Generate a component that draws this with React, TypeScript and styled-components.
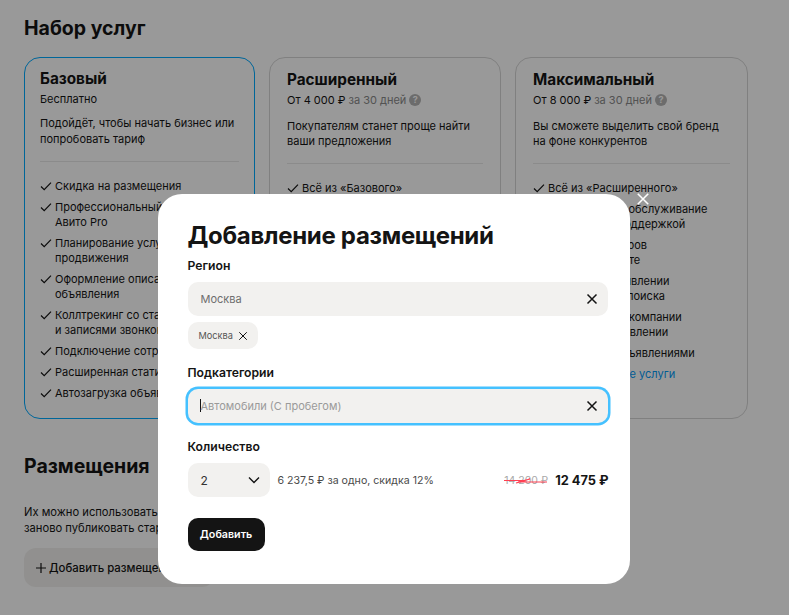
import React from "react";
import styled, { createGlobalStyle } from "styled-components";

const Global = createGlobalStyle`
  html, body { margin: 0; padding: 0; height: 100%; overflow: hidden; background: #fff; }
  body { font-family: Inter, "Noto Sans", sans-serif; color: #141414; }
  * { box-sizing: border-box; }
`;

const Page = styled.main`
  width: 789px;
  height: 615px;
  padding: 16px 41px 0 24px;
  overflow: hidden;
`;
const H2 = styled.h2`
  margin: 0;
  font-size: 19.5px;
  line-height: 24px;
  font-weight: 700;
`;
const Plans = styled.div`
  display: grid;
  grid-template-columns: 231px 232px 233px;
  gap: 14px;
  margin-top: 17px;
  height: 362px;
`;
const Card = styled.article<{ $active?: boolean }>`
  border: 1px solid ${(p) => (p.$active ? "#00aaff" : "#d6d6d6")};
  border-radius: 16px;
  padding: ${(p) => (p.$active ? "11px 15px 0" : "12px 17px 0")};
`;
const PlanName = styled.h3`
  margin: 0;
  font-size: 15.3px;
  line-height: 20px;
  font-weight: 700;
`;
const Price = styled.div`
  margin-top: 2px;
  display: flex;
  align-items: center;
  font-size: 11px;
  line-height: 16px;
  gap: 3px;
`;
const Muted = styled.span`
  color: #8a8a8a;
`;
const Help = styled.span`
  width: 12px;
  height: 12px;
  border-radius: 50%;
  background: #b5b5b5;
  color: #fff;
  font-size: 9px;
  line-height: 12px;
  font-weight: 700;
  text-align: center;
`;
const Desc = styled.p<{ $active?: boolean }>`
  margin: ${(p) => (p.$active ? "8px 0 0" : "11px 0 0")};
  font-size: 11px;
  line-height: ${(p) => (p.$active ? "16px" : "15px")};
`;
const Divider = styled.hr`
  border: 0;
  border-top: 1px solid #e8e8e8;
  margin: 14px 0 17px;
`;
const List = styled.ul`
  margin: 0;
  padding: 0;
  list-style: none;
  display: flex;
  flex-direction: column;
  gap: 6px;
`;
const Item = styled.li`
  display: flex;
  gap: 3px;
  font-size: 11px;
  line-height: 15px;
`;
const Check = styled.svg`
  flex: none;
  width: 12px;
  height: 12px;
  margin-top: 1px;
`;
const MoreLink = styled.a`
  font-size: 11px;
  line-height: 15px;
  color: #0099f7;
  padding-left: 15px;
`;
const Section = styled.section`
  margin-top: 35px;
`;
const SectionText = styled.p`
  margin: 26px 0 0;
  font-size: 11.2px;
  line-height: 16px;
`;
const AddPlacement = styled.button`
  margin-top: 12px;
  height: 39px;
  width: 190px;
  padding: 0 11px;
  display: flex;
  align-items: center;
  gap: 2px;
  border: 0;
  border-radius: 12px;
  background: #f2f1ef;
  font: 500 11.4px Inter, sans-serif;
  color: #141414;
  white-space: nowrap;
`;

const Overlay = styled.div`
  position: fixed;
  inset: 0;
  padding: 194px 2px 0 0;
  background: rgba(0, 0, 0, 0.4);
  display: flex;
  align-items: flex-start;
  justify-content: center;
`;
const Modal = styled.div`
  position: relative;
  width: 472px;
  height: 390px;
  background: #fff;
  border-radius: 24px;
  padding: 28px 22px 0 30px;
`;
const Close = styled.button`
  position: absolute;
  top: -2px;
  right: -20px;
  width: 14px;
  height: 14px;
  padding: 0;
  border: 0;
  background: none;
  color: #fff;
  display: flex;
`;
const Title = styled.h1`
  margin: 0;
  font-size: 24px;
  letter-spacing: -0.3px;
  line-height: 28px;
  font-weight: 700;
`;
const FieldLabel = styled.div<{ $top: number }>`
  font-size: 12.2px;
  line-height: 16px;
  font-weight: 600;
  margin-top: ${(p) => p.$top}px;
  margin-bottom: 8px;
`;
const Input = styled.div<{ $focused?: boolean }>`
  height: 34px;
  border-radius: 10px;
  background: #f2f1ef;
  padding: 0 10px 0 12px;
  display: flex;
  align-items: center;
  justify-content: space-between;
  font-size: 11px;
  color: ${(p) => (p.$focused ? "#9a9a9a" : "#6e6e6e")};
  ${(p) => (p.$focused ? "box-shadow: 0 0 0 2.5px #45c1ff;" : "")}
`;
const InputValue = styled.span`
  padding-left: 1px;
`;
const Caret = styled.span`
  display: inline-block;
  width: 1px;
  height: 13px;
  margin-left: -1px;
  background: #141414;
  vertical-align: -2px;
`;
const Chip = styled.div`
  margin-top: 6px;
  width: 70px;
  height: 27px;
  border-radius: 10px;
  background: #f2f1ef;
  display: flex;
  align-items: center;
  gap: 5px;
  padding-left: 11px;
  font-size: 9.2px;
  color: #555;
`;
const CountRow = styled.div`
  display: flex;
  align-items: center;
`;
const Select = styled.div`
  width: 82px;
  height: 34px;
  border-radius: 10px;
  background: #f2f1ef;
  padding: 0 10px 0 13px;
  display: flex;
  align-items: center;
  justify-content: space-between;
  font-size: 12px;
  color: #333;
`;
const Discount = styled.span`
  margin-left: 8px;
  font-size: 10.6px;
  color: #4a4a4a;
`;
const OldPrice = styled.span`
  position: relative;
  margin-left: auto;
  font-size: 10.5px;
  color: #a8a8a8;
`;
const Scribble = styled.svg`
  position: absolute;
  left: 0;
  top: 2px;
  width: 44px;
  height: 10px;
`;
const NewPrice = styled.span`
  margin-left: 7px;
  margin-right: -1px;
  font-size: 12.8px;
  font-weight: 700;
`;
const Submit = styled.button`
  margin-top: 21px;
  height: 33px;
  width: 77px;
  border: 0;
  border-radius: 10px;
  background: #141414;
  color: #fff;
  font: 600 10.7px Inter, sans-serif;
  padding: 0;
`;

const CheckIcon = () => (
  <Check viewBox="0 0 12 12" fill="none">
    <path d="M1 6.5 4.2 9.6 11 2.6" stroke="#141414" strokeWidth="1.2" />
  </Check>
);
const CrossIcon = ({ size = 12, color = "#141414", sw = 1.5 }: { size?: number; color?: string; sw?: number }) => (
  <svg width={size} height={size} viewBox="0 0 12 12" fill="none">
    <path d="M1.5 1.5 10.5 10.5M10.5 1.5 1.5 10.5" stroke={color} strokeWidth={sw} />
  </svg>
);

const plans = [
  {
    name: "Базовый",
    active: true,
    desc: ["Подойдёт, чтобы начать бизнес или", "попробовать тариф"],
    items: [
      ["Скидка на размещения"],
      ["Профессиональный кабинет", "Авито Pro"],
      ["Планирование услуг", "продвижения"],
      ["Оформление описания", "объявления"],
      ["Коллтрекинг со статистикой", "и записями звонков"],
      ["Подключение сотрудников"],
      ["Расширенная статистика"],
      ["Автозагрузка объявлений"],
    ],
  },
  {
    name: "Расширенный",
    price: "От 4 000 ₽",
    desc: ["Покупателям станет проще найти", "ваши предложения"],
    items: [["Всё из «Базового»"], ["Больше скидка на размещения"]],
  },
  {
    name: "Максимальный",
    price: "От 8 000 ₽",
    desc: ["Вы сможете выделить свой бренд", "на фоне конкурентов"],
    items: [
      ["Всё из «Расширенного»"],
      ["Приоритетное обслуживание", "и отдельной поддержкой"],
      ["Поднятие товаров", "на первом месте"],
      ["Логотип в объявлении", "и на странице поиска"],
      ["Данные своей компании", "в каждом объявлении"],
      ["Управление объявлениями"],
    ],
    more: "Посмотреть все услуги",
  },
];

export default function App() {
  return (
    <>
      <Global />
      <Page>
        <H2>Набор услуг</H2>
        <Plans>
          {plans.map((plan) => (
            <Card key={plan.name} $active={plan.active}>
              <PlanName>{plan.name}</PlanName>
              <Price>
                {plan.price ? (
                  <>
                    {plan.price} <Muted>за 30 дней</Muted> <Help>?</Help>
                  </>
                ) : (
                  "Бесплатно"
                )}
              </Price>
              <Desc $active={plan.active}>
                {plan.desc[0]}
                <br />
                {plan.desc[1]}
              </Desc>
              <Divider />
              <List>
                {plan.items.map((lines) => (
                  <Item key={lines[0]}>
                    <CheckIcon />
                    <span>
                      {lines.map((line, i) => (
                        <React.Fragment key={line}>
                          {i > 0 && <br />}
                          {line}
                        </React.Fragment>
                      ))}
                    </span>
                  </Item>
                ))}
                {plan.more && <MoreLink>{plan.more}</MoreLink>}
              </List>
            </Card>
          ))}
        </Plans>
        <Section>
          <H2>Размещения</H2>
          <SectionText>
            Их можно использовать для новых объявлений или
            <br />
            заново публиковать старые
          </SectionText>
          <AddPlacement>
            <svg width="12" height="12" viewBox="0 0 12 12" fill="none">
              <path d="M6 1v10M1 6h10" stroke="#141414" strokeWidth="1.2" />
            </svg>
            Добавить размещения
          </AddPlacement>
        </Section>
      </Page>
      <Overlay>
        <Modal>
          <Close aria-label="Закрыть">
            <CrossIcon size={14} color="#fff" sw={1.3} />
          </Close>
          <Title>Добавление размещений</Title>
          <FieldLabel $top={8}>Регион</FieldLabel>
          <Input>
            <InputValue>Москва</InputValue>
            <CrossIcon />
          </Input>
          <Chip>
            Москва
            <CrossIcon size={10} sw={1.2} />
          </Chip>
          <FieldLabel $top={16}>Подкатегории</FieldLabel>
          <Input $focused>
            <InputValue>
              <Caret />
              Автомобили (С пробегом)
            </InputValue>
            <CrossIcon />
          </Input>
          <FieldLabel $top={16}>Количество</FieldLabel>
          <CountRow>
            <Select>
              2
              <svg width="12" height="8" viewBox="0 0 12 8" fill="none">
                <path d="M1 1.5 6 6.5 11 1.5" stroke="#141414" strokeWidth="1.4" />
              </svg>
            </Select>
            <Discount>6 237,5 ₽ за одно, скидка 12%</Discount>
            <OldPrice>
              14 200 ₽
              <Scribble viewBox="0 0 44 10" fill="none">
                <path d="M0 4.5 H22 L12 7 L26 3 L14 6 H43" stroke="#ff4053" strokeWidth="1.2" />
              </Scribble>
            </OldPrice>
            <NewPrice>12 475 ₽</NewPrice>
          </CountRow>
          <Submit>Добавить</Submit>
        </Modal>
      </Overlay>
    </>
  );
}
